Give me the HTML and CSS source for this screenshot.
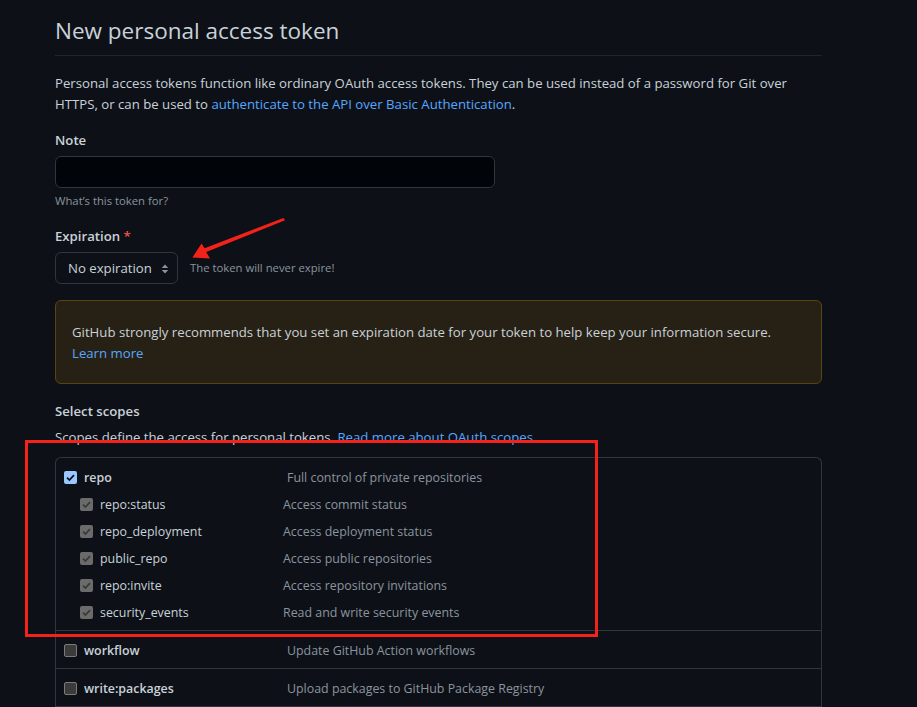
FILE: index.html
```html
<!DOCTYPE html>
<html lang="en">
<head>
<meta charset="utf-8">
<title>New personal access token</title>
<link rel="stylesheet" href="styles.css">
</head>
<body>
<main class="page">
  <div class="subhead">
    <h1 class="subhead-title">New personal access token</h1>
  </div>
  <p class="intro">Personal access tokens function like ordinary OAuth access tokens. They can be used instead of a password for Git over HTTPS, or can be used to <a href="#" class="link">authenticate to the API over Basic Authentication</a>.</p>

  <div class="form-group">
    <label class="label">Note</label>
    <div class="input"></div>
    <p class="note">What’s this token for?</p>
  </div>

  <div class="form-group">
    <label class="label">Expiration <span class="req">*</span></label>
    <div class="select-row">
      <div class="select">
        <span>No expiration</span>
        <svg class="updown" width="8" height="12" viewBox="0 0 8 12"><path d="M4 1.5 L7.2 5 H0.8 Z M4 10.5 L7.2 7 H0.8 Z" fill="#8b949e"/></svg>
      </div>
      <span class="note inline">The token will never expire!</span>
    </div>
  </div>

  <div class="flash-warn">
    GitHub strongly recommends that you set an expiration date for your token to help keep your information secure.<br>
    <a href="#" class="link">Learn more</a>
  </div>

  <div class="scopes-head">
    <label class="label">Select scopes</label>
    <p class="scopes-desc">Scopes define the access for personal tokens. <a href="#" class="link">Read more about OAuth scopes</a></p>
  </div>

  <div class="scopes">
    <div class="scope-group">
      <div class="scope-row top">
        <span class="cb cb-on"><svg width="11" height="11" viewBox="0 0 12 12"><path d="M2.2 6.2 L4.8 8.8 L9.8 3.4" fill="none" stroke="#0d1117" stroke-width="1.9"/></svg></span>
        <span class="scope-name bold">repo</span>
        <span class="scope-desc">Full control of private repositories</span>
      </div>
      <div class="scope-row sub">
        <span class="cb cb-dis"><svg width="11" height="11" viewBox="0 0 12 12"><path d="M2.2 6.2 L4.8 8.8 L9.8 3.4" fill="none" stroke="#3a3a3a" stroke-width="1.9"/></svg></span>
        <span class="scope-name">repo:status</span>
        <span class="scope-desc">Access commit status</span>
      </div>
      <div class="scope-row sub">
        <span class="cb cb-dis"><svg width="11" height="11" viewBox="0 0 12 12"><path d="M2.2 6.2 L4.8 8.8 L9.8 3.4" fill="none" stroke="#3a3a3a" stroke-width="1.9"/></svg></span>
        <span class="scope-name">repo_deployment</span>
        <span class="scope-desc">Access deployment status</span>
      </div>
      <div class="scope-row sub">
        <span class="cb cb-dis"><svg width="11" height="11" viewBox="0 0 12 12"><path d="M2.2 6.2 L4.8 8.8 L9.8 3.4" fill="none" stroke="#3a3a3a" stroke-width="1.9"/></svg></span>
        <span class="scope-name">public_repo</span>
        <span class="scope-desc">Access public repositories</span>
      </div>
      <div class="scope-row sub">
        <span class="cb cb-dis"><svg width="11" height="11" viewBox="0 0 12 12"><path d="M2.2 6.2 L4.8 8.8 L9.8 3.4" fill="none" stroke="#3a3a3a" stroke-width="1.9"/></svg></span>
        <span class="scope-name">repo:invite</span>
        <span class="scope-desc">Access repository invitations</span>
      </div>
      <div class="scope-row sub">
        <span class="cb cb-dis"><svg width="11" height="11" viewBox="0 0 12 12"><path d="M2.2 6.2 L4.8 8.8 L9.8 3.4" fill="none" stroke="#3a3a3a" stroke-width="1.9"/></svg></span>
        <span class="scope-name">security_events</span>
        <span class="scope-desc">Read and write security events</span>
      </div>
    </div>
    <div class="scope-group">
      <div class="scope-row top">
        <span class="cb cb-off"></span>
        <span class="scope-name bold">workflow</span>
        <span class="scope-desc">Update GitHub Action workflows</span>
      </div>
    </div>
    <div class="scope-group">
      <div class="scope-row top">
        <span class="cb cb-off"></span>
        <span class="scope-name bold">write:packages</span>
        <span class="scope-desc">Upload packages to GitHub Package Registry</span>
      </div>
    </div>
  </div>
</main>

<svg class="annot-arrow" width="917" height="707" viewBox="0 0 917 707">
  <polygon points="283.5,218 285,220.2 206.2,252 210,258.6 192.4,257.5 201.6,243.4 204.6,248.3" fill="#f5221b"/>
</svg>
<div class="annot-box"></div>
</body>
</html>
```
FILE: styles.css
```css
* { box-sizing: border-box; }
html, body {
  margin: 0;
  padding: 0;
  background: #0d1117;
  height: 100%;
  overflow: hidden;
}
body {
  font-family: "Open Sans", "Noto Sans", "Liberation Sans", sans-serif;
  font-size: 13.2px;
  line-height: 21px;
  color: #c9d1d9;
  position: relative;
}
.page {
  width: 767px;
  margin-left: 55px;
}
.subhead {
  border-bottom: 1px solid #21262d;
  padding-top: 13px;
  padding-bottom: 6px;
  margin-bottom: 17px;
}
.subhead-title {
  margin: 0;
  font-size: 22.5px;
  line-height: 36px;
  font-weight: 400;
  color: #c9d1d9;
}
.intro {
  margin: 0 0 15px;
}
.link { color: #58a6ff; text-decoration: none; }
.form-group { margin-bottom: 16px; }
.label {
  display: block;
  font-weight: 600;
  margin-bottom: 5px;
}
.req { color: #f85149; }
.input {
  width: 440px;
  height: 32px;
  background: #010409;
  border: 1px solid #30363d;
  border-radius: 6px;
}
.note {
  margin: 4px 0 0;
  font-size: 11.3px;
  line-height: 18px;
  color: #8b949e;
}
.note.inline { margin: 0 0 0 12px; }
.select-row {
  display: flex;
  align-items: center;
}
.select {
  width: 123px;
  height: 32px;
  display: flex;
  align-items: center;
  justify-content: space-between;
  padding: 0 8px 0 12px;
  border: 1px solid #30363d;
  border-radius: 6px;
  background: #0d1117;
  color: #c9d1d9;
}
.updown { margin-top: 1px; }
.flash-warn {
  margin-top: 16px;
  padding: 21px 16px 19px;
  background: #272115;
  border: 1px solid #5a4315;
  border-radius: 6px;
  line-height: 21px;
}
.scopes-head { margin-top: 17px; }
.scopes-desc { margin: 0 0 9px; }
.scopes {
  border: 1px solid #30363d;
  border-bottom: none;
  border-radius: 6px 6px 0 0;
  font-size: 12.4px;
}
.scope-group {
  padding: 9px 8px 7px;
  border-bottom: 1px solid #30363d;
}
.scope-row {
  display: flex;
  align-items: center;
  height: 21px;
}
.scope-row.sub {
  margin-top: 6px;
  padding-left: 16px;
}
.cb {
  width: 13px;
  height: 13px;
  border-radius: 2px;
  margin-right: 7px;
  flex: none;
  display: flex;
  align-items: center;
  justify-content: center;
}
.cb-on { background: #9ac7ff; }
.cb-dis { background: #6b6b6b; }
.cb-off { background: #3b3b3b; border: 1px solid #7a7a7a; }
.scope-name { flex: none; width: 203px; }
.scope-row.sub .scope-name { width: 183px; }
.bold { font-weight: 600; }
.scope-desc { color: #8b949e; }
.annot-arrow {
  position: absolute;
  left: 0;
  top: 0;
  pointer-events: none;
}
.annot-box {
  position: absolute;
  left: 25px;
  top: 440px;
  width: 573px;
  height: 197px;
  border: 3px solid #f5221b;
  pointer-events: none;
}
```
